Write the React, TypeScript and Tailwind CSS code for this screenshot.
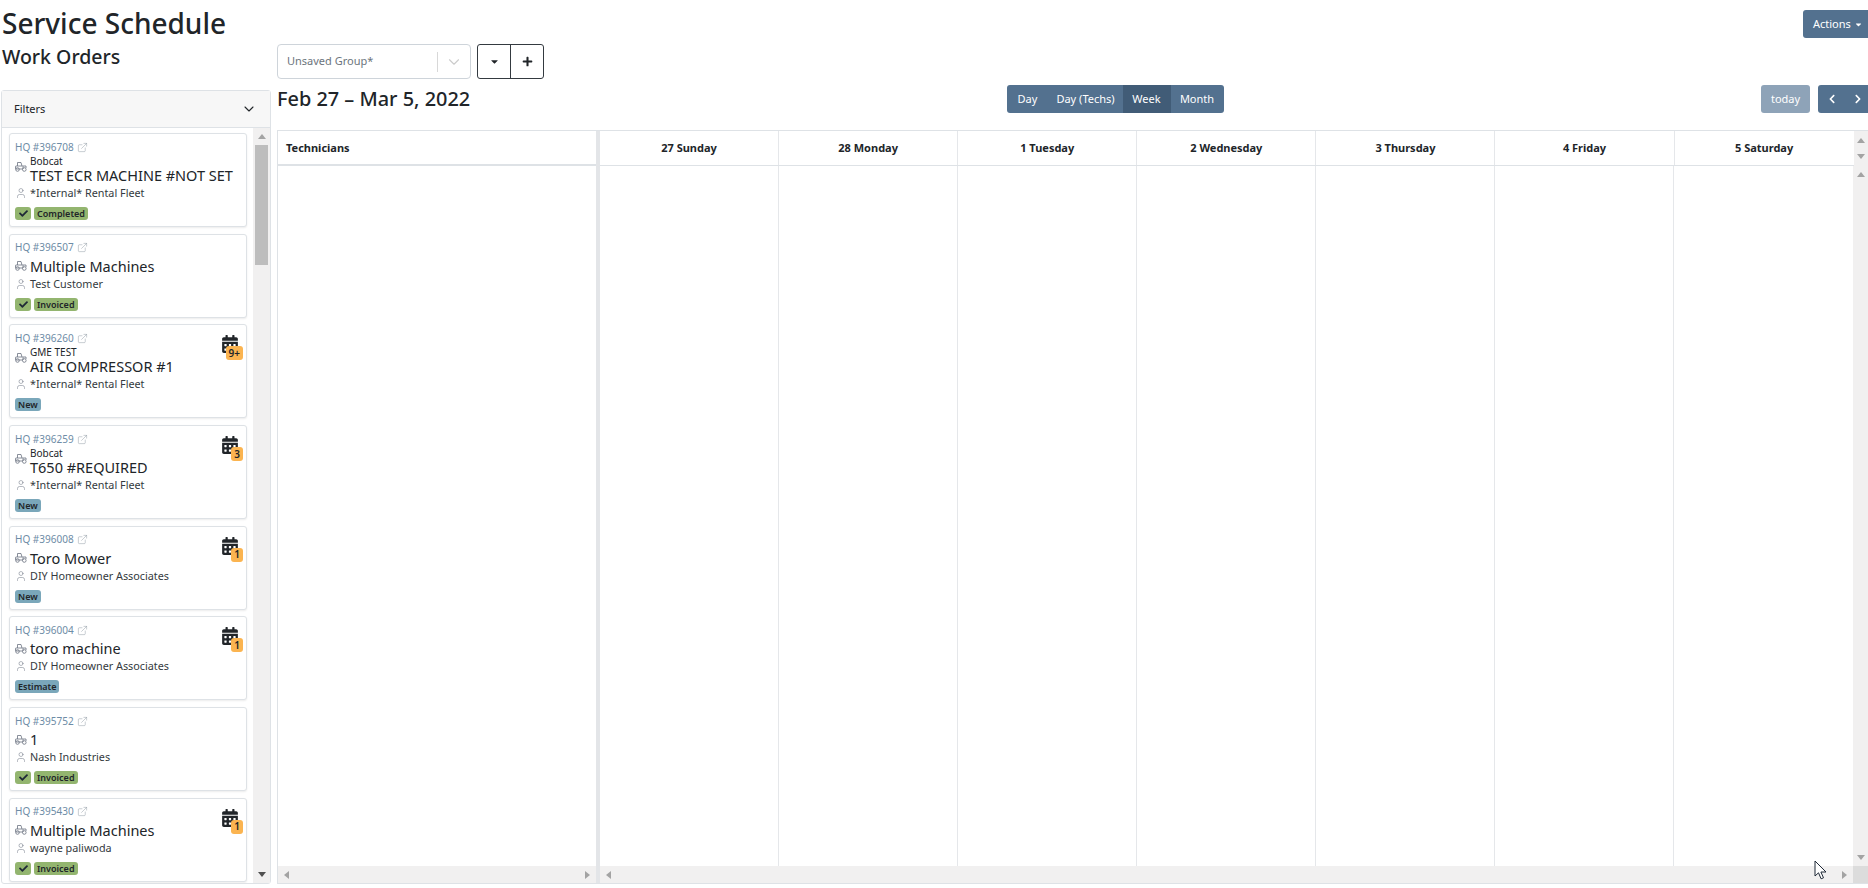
import { ChevronDown, ExternalLink, User } from 'lucide-react';
import { FaCalendarAlt, FaCaretDown, FaCheck, FaChevronLeft, FaChevronRight, FaPlus } from 'react-icons/fa';

interface WorkOrder {
  id: string;
  make?: string;
  name: string;
  customer: string;
  status: string;
  done?: boolean;
  count?: string;
}

const workOrders: WorkOrder[] = [
  { id: '396708', make: 'Bobcat', name: 'TEST ECR MACHINE #NOT SET', customer: '*Internal* Rental Fleet', status: 'Completed', done: true },
  { id: '396507', name: 'Multiple Machines', customer: 'Test Customer', status: 'Invoiced', done: true },
  { id: '396260', make: 'GME TEST', name: 'AIR COMPRESSOR #1', customer: '*Internal* Rental Fleet', status: 'New', count: '9+' },
  { id: '396259', make: 'Bobcat', name: 'T650 #REQUIRED', customer: '*Internal* Rental Fleet', status: 'New', count: '3' },
  { id: '396008', name: 'Toro Mower', customer: 'DIY Homeowner Associates', status: 'New', count: '1' },
  { id: '396004', name: 'toro machine', customer: 'DIY Homeowner Associates', status: 'Estimate', count: '1' },
  { id: '395752', name: '1', customer: 'Nash Industries', status: 'Invoiced', done: true },
  { id: '395430', name: 'Multiple Machines', customer: 'wayne paliwoda', status: 'Invoiced', done: true, count: '1' },
];

const days = ['27 Sunday', '28 Monday', '1 Tuesday', '2 Wednesday', '3 Thursday', '4 Friday', '5 Saturday'];

function MachineIcon({ raised }: { raised: boolean }) {
  return (
    <svg width="12" height="11" viewBox="0 0 12 11" fill="none" stroke="#6b7280" strokeWidth="0.8" className={raised ? 'mb-[7px] shrink-0' : 'shrink-0'}>
      <path d="M2.5 5V1.5h3.5l1 3.5" />
      <rect x="0.5" y="5" width="7.5" height="3" rx="0.5" />
      <circle cx="2.5" cy="8.5" r="1.8" />
      <circle cx="9.3" cy="8.5" r="1.8" />
      <path d="M8 5h3v2" />
    </svg>
  );
}

function Arrow({ dir, color = 'border-[#a3a3a3]' }: { dir: 'up' | 'down' | 'left' | 'right'; color?: string }) {
  const cls = {
    up: 'border-x-[4px] border-x-transparent border-b-[5px]',
    down: 'border-x-[4px] border-x-transparent border-t-[5px]',
    left: 'border-y-[4px] border-y-transparent border-r-[5px]',
    right: 'border-y-[4px] border-y-transparent border-l-[5px]',
  }[dir];
  return <div className={`h-0 w-0 ${cls} ${color}`} />;
}

function WorkOrderCard({ order }: { order: WorkOrder }) {
  return (
    <div className="relative shrink-0 rounded-[3px] border border-[#dee2e6] bg-white pl-[5px] pr-1 pt-[6px] pb-[6px] shadow-[0_1px_2px_rgba(0,0,0,0.08)]">
      <div className="flex h-[14px] items-center gap-[3px] text-[10px] text-[#6e8ca6]">
        HQ #{order.id}
        <ExternalLink size={11} strokeWidth={0.9} color="#7b8794" />
      </div>
      <div className="mt-[2px] flex items-center gap-[3px]">
        <MachineIcon raised={!!order.make} />
        <div className="min-w-0">
          {order.make && <div className="h-[11px] text-[10px] leading-[11px] text-[#212529]">{order.make}</div>}
          <div className={`whitespace-nowrap text-[14.5px] text-[#212529] ${order.make ? 'h-[17px] leading-[17px]' : 'h-[18px] leading-[18px]'}`}>{order.name}</div>
        </div>
      </div>
      <div className="mt-[1px] flex h-[16px] items-center gap-[3px] text-[10.8px] text-[#343a40]">
        <User size={12} strokeWidth={1} color="#6b7280" className="shrink-0" />
        {order.customer}
      </div>
      <div className="mt-[6px] flex h-[13px] gap-[3px]">
        {order.done && (
          <div className="flex w-[16px] items-center justify-center rounded-[3px] bg-[#93b56f] text-[#1f2937]">
            <FaCheck size={9} />
          </div>
        )}
        <div className={`rounded-[3px] px-[3px] text-[9px] font-semibold leading-[13px] text-[#212529] ${order.done ? 'bg-[#93b56f]' : 'bg-[#7aa7ba]'}`}>
          {order.status}
        </div>
      </div>
      {order.count && (
        <div className="absolute right-[8px] top-[10px] h-[24px] w-[16px]">
          <FaCalendarAlt size={18} color="#212529" className="-ml-px" />
          <div className="absolute right-[-5px] top-[11px] flex h-[14px] min-w-[12px] items-center justify-center whitespace-nowrap rounded-[3px] bg-[#fbb450] px-[3px] text-[10px] font-semibold text-[#212529]">
            {order.count}
          </div>
        </div>
      )}
    </div>
  );
}

export default function App() {
  return (
    <div className="relative h-[888px] w-[1868px] overflow-hidden bg-white text-[#212529] [font-family:'Noto_Sans',sans-serif]">
      <div className="flex h-[44px] items-start justify-between">
        <h1 className="ml-[2px] mt-[5px] text-[28px] font-medium leading-[36px]">Service Schedule</h1>
        <button className="mt-[10px] flex h-[28px] w-[65px] items-center gap-[3px] rounded-l-[3px] bg-[#53718f] pl-[10px] text-[11px] text-white">
          Actions
          <FaCaretDown size={9} />
        </button>
      </div>

      <div className="flex h-[844px]">
        {/* Work orders column */}
        <div className="ml-[1px] w-[270px] shrink-0">
          <h2 className="ml-[1px] h-[46px] text-[19.5px] font-medium leading-[26px]">Work Orders</h2>
          <div className="flex h-[794px] flex-col rounded-[3px] border border-[#dee2e6]">
            <div className="flex h-[37px] shrink-0 items-center justify-between border-b border-[#dee2e6] bg-[#f7f7f7] pl-[12px] pr-[13px] text-[11px]">
              Filters
              <ChevronDown size={16} strokeWidth={1.6} />
            </div>
            <div className="flex min-h-0 flex-1">
              <div className="flex min-w-0 flex-1 flex-col gap-[6.7px] overflow-hidden pl-[7px] pr-[6px] pt-[5px]">
                {workOrders.map((order) => <WorkOrderCard key={order.id} order={order} />)}
              </div>
              <div className="flex w-[17px] shrink-0 flex-col items-center bg-[#f1f0f0]">
                <div className="flex h-[17px] items-center justify-center"><Arrow dir="up" /></div>
                <div className="h-[120px] w-[13px] bg-[#bdbdbd]" />
                <div className="flex-1" />
                <div className="flex h-[17px] items-center justify-center"><Arrow dir="down" color="border-[#505050]" /></div>
              </div>
            </div>
          </div>
        </div>

        {/* Calendar column */}
        <div className="ml-[6px] flex min-w-0 flex-1 flex-col">
          <div className="flex h-[35px] gap-[6px]">
            <div className="flex w-[194px] items-center rounded-[4px] border border-[#ced4da] pl-[9px] text-[11px] text-[#6c757d]">
              <span className="flex-1">Unsaved Group*</span>
              <div className="h-[20px] w-px bg-[#d8d8d8]" />
              <ChevronDown size={18} strokeWidth={1.5} color="#cccccc" className="mx-[7px]" />
            </div>
            <div className="flex w-[67px] rounded-[3px] border border-[#343a40] text-[#212529]">
              <div className="flex w-[33px] items-center justify-center border-r border-[#343a40]"><FaCaretDown size={11} /></div>
              <div className="flex flex-1 items-center justify-center"><FaPlus size={11} /></div>
            </div>
          </div>

          <div className="mt-[6px] flex h-[28px] items-center justify-between">
            <div className="w-[192px] whitespace-nowrap text-[19.9px] font-medium leading-[28px]">Feb 27 – Mar 5, 2022</div>
            <div className="flex h-full overflow-hidden rounded-[3px] bg-[#53718f] text-[11px] text-white">
              <div className="flex w-[42px] items-center justify-center">Day</div>
              <div className="flex w-[74px] items-center justify-center whitespace-nowrap">Day (Techs)</div>
              <div className="flex w-[48px] items-center justify-center bg-[#415c77]">Week</div>
              <div className="flex w-[53px] items-center justify-center">Month</div>
            </div>
            <div className="flex h-full gap-[8px]">
              <div className="flex w-[49px] items-center justify-center rounded-[3px] bg-[#8ea3b8] text-[11px] text-white">today</div>
              <div className="flex w-[50px] items-center rounded-l-[3px] bg-[#53718f] pl-[9px] text-white">
                <FaChevronLeft size={10} />
                <FaChevronRight size={10} className="ml-[16px]" />
              </div>
            </div>
          </div>

          <div className="mt-[17px] flex h-[754px] flex-col border-y border-l border-[#dee2e6]">
            <div className="flex h-[35px] shrink-0">
              <div className="flex w-[318px] shrink-0 items-center border-b-2 border-[#dee2e6] pl-[8px] pt-[2px] text-[11px] font-bold">Technicians</div>
              <div className="w-[4px] shrink-0 bg-[#e3e5e8]" />
              <div className="flex flex-1 border-b border-[#dee2e6]">
                {days.map((day) => (
                  <div key={day} className="flex w-[179.1px] items-center justify-center border-r border-[#e5e7ea] text-[11px] font-bold last:border-r-0">{day}</div>
                ))}
              </div>
              <div className="flex w-[15px] shrink-0 flex-col items-center justify-around bg-[#f1f0f0] py-[2px]">
                <Arrow dir="up" />
                <Arrow dir="down" />
              </div>
            </div>
            <div className="flex min-h-0 flex-1">
              <div className="flex w-[318px] shrink-0 flex-col">
                <div className="flex-1" />
                <div className="flex h-[17px] items-center justify-between bg-[#f1f0f0] px-[6px]">
                  <Arrow dir="left" />
                  <Arrow dir="right" />
                </div>
              </div>
              <div className="w-[4px] shrink-0 bg-[#e3e5e8]" />
              <div className="flex min-w-0 flex-1 flex-col">
                <div className="flex flex-1">
                  {days.map((day) => (
                    <div key={day} className="w-[179.1px] border-r border-[#e5e7ea] last:border-r-0" />
                  ))}
                </div>
                <div className="flex h-[17px] items-center justify-between bg-[#f1f0f0] px-[6px]">
                  <Arrow dir="left" />
                  <Arrow dir="right" />
                </div>
              </div>
              <div className="flex w-[15px] shrink-0 flex-col items-center bg-[#f1f0f0]">
                <div className="flex h-[17px] items-center justify-center"><Arrow dir="up" /></div>
                <div className="flex-1" />
                <div className="flex h-[17px] items-center justify-center"><Arrow dir="down" /></div>
                <div className="h-[17px] w-full bg-[#dcdcdc]" />
              </div>
            </div>
          </div>
        </div>
      </div>

      {/* Mouse pointer caught in the screenshot */}
      <svg width="14" height="20" viewBox="0 0 14 20" className="absolute left-[1814px] top-[860px]">
        <path d="M1 1v15l3.5-3.2 2.6 6 2.4-1-2.6-5.8H12z" fill="#ffffff" stroke="#1f2937" strokeWidth="1" />
      </svg>
    </div>
  );
}
